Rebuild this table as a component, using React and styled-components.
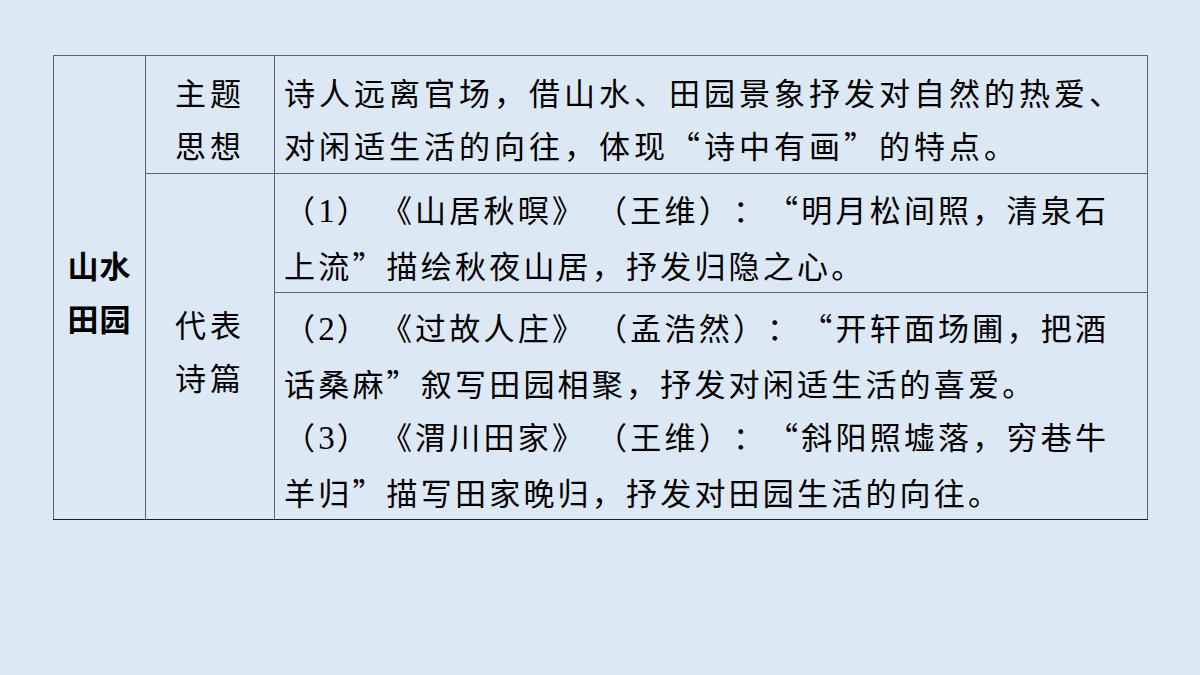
import React from "react";
import styled, { createGlobalStyle } from "styled-components";

const Global = createGlobalStyle`
  html, body {
    margin: 0;
    padding: 0;
    background: #dde8f5;
  }
  body {
    font-family: "Noto Sans CJK SC", "Noto Sans", sans-serif;
    color: #000;
  }
`;

const Page = styled.div`
  width: 1200px;
  height: 675px;
  padding: 55px 0 0 53px;
  box-sizing: border-box;
`;

const Table = styled.table`
  border-collapse: collapse;
  table-layout: fixed;
  width: 1094px;
  font-size: 31px;
  line-height: 53px;
  text-spacing-trim: space-all;
`;

const Row = styled.tr`
  height: ${(p) => p.$h}px;
`;

const Cell = styled.td`
  border: 1px solid #5b636c;
  padding: ${(p) => (p.$left ? "6px 0 0 9px" : "6px 0 0 0")};
  vertical-align: middle;
  text-align: ${(p) => (p.$left ? "left" : "center")};
  font-weight: ${(p) => (p.$bold ? 700 : 400)};
  letter-spacing: ${(p) => p.$ls || "4px"};
  white-space: nowrap;
  overflow: hidden;
  text-spacing-trim: space-all;
`;

const BottomCell = styled(Cell)`
  border-bottom-color: #1c1f22;
`;

const Num = styled.span`
  font-family: "Liberation Serif", serif;
  font-size: 33px;
  letter-spacing: 2px;
`;

const Gap = styled.span`
  display: inline-block;
  width: 10px;
`;

const Line = styled.div``;

export default function App() {
  return (
    <>
      <Global />
      <Page>
        <Table>
          <colgroup>
            <col style={{ width: 92 }} />
            <col style={{ width: 129 }} />
            <col style={{ width: 873 }} />
          </colgroup>
          <tbody>
            <Row $h={118}>
              <BottomCell rowSpan={3} $bold $ls="1px">
                <Line>山水</Line>
                <Line>田园</Line>
              </BottomCell>
              <Cell>
                <Line>主题</Line>
                <Line>思想</Line>
              </Cell>
              <Cell $left>
                <Line>诗人远离官场，借山水、田园景象抒发对自然的热爱、</Line>
                <Line>对闲适生活的向往，体现“诗中有画”的特点。</Line>
              </Cell>
            </Row>
            <Row $h={119}>
              <BottomCell rowSpan={2}>
                <Line>代表</Line>
                <Line>诗篇</Line>
              </BottomCell>
              <Cell $left $ls="3.2px">
                <Line>
                  （<Num>1</Num>）<Gap />《山居秋暝》<Gap />（王维）：“明月松间照，清泉石
                </Line>
                <Line>上流”描绘秋夜山居，抒发归隐之心。</Line>
              </Cell>
            </Row>
            <Row $h={227}>
              <BottomCell $left $ls="3.2px">
                <Line>
                  （<Num>2</Num>）<Gap />《过故人庄》<Gap />（孟浩然）：“开轩面场圃，把酒
                </Line>
                <Line>话桑麻”叙写田园相聚，抒发对闲适生活的喜爱。</Line>
                <Line>
                  （<Num>3</Num>）<Gap />《渭川田家》<Gap />（王维）：“斜阳照墟落，穷巷牛
                </Line>
                <Line>羊归”描写田家晚归，抒发对田园生活的向往。</Line>
              </BottomCell>
            </Row>
          </tbody>
        </Table>
      </Page>
    </>
  );
}
